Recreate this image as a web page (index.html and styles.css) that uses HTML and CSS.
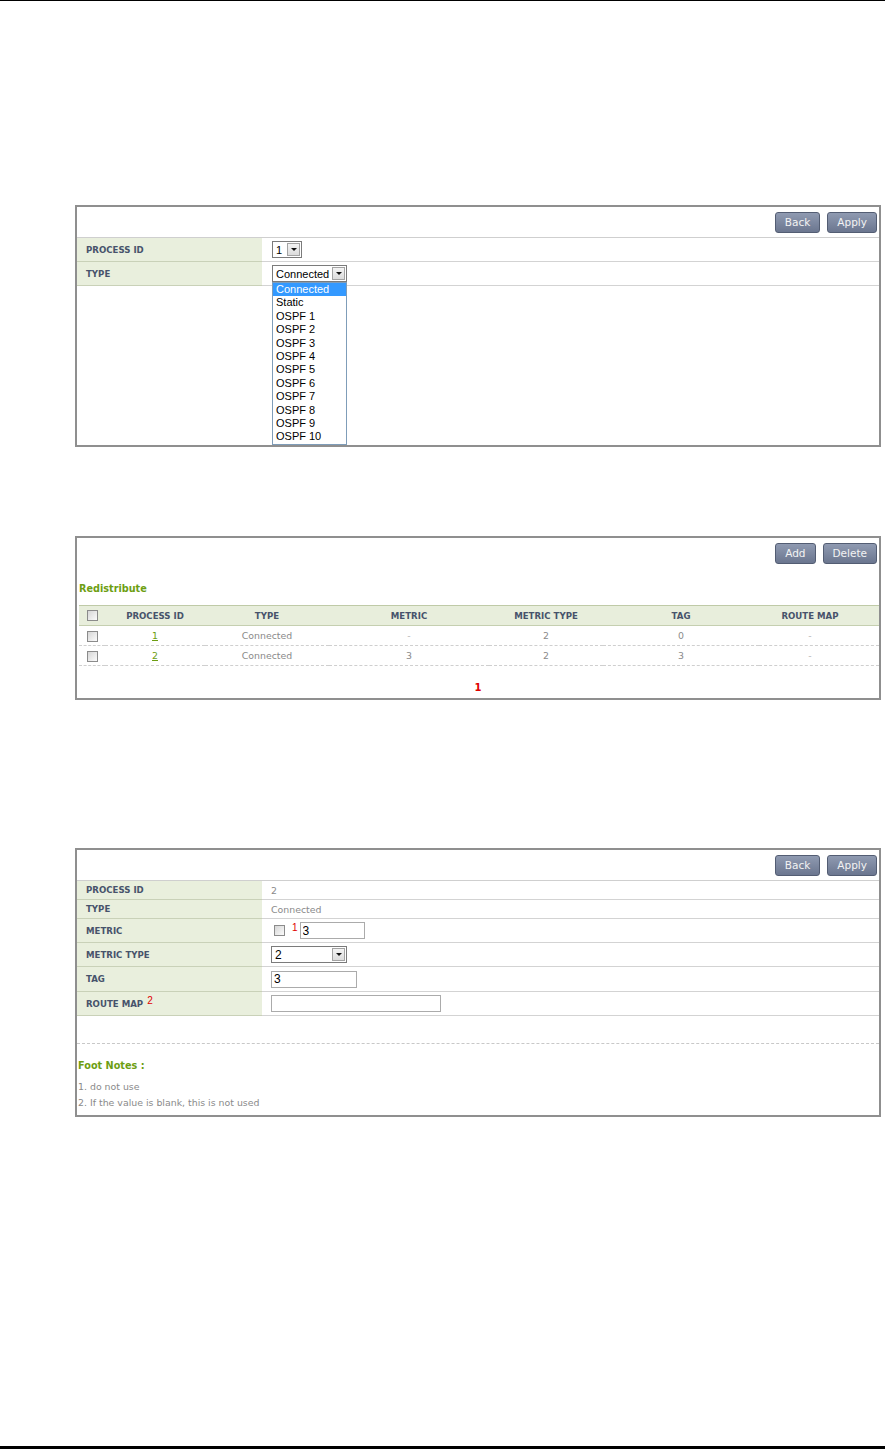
FILE: index.html
```html
<!DOCTYPE html>
<html lang="en">
  <head>
    <meta charset="UTF-8" />
    <meta name="viewport" content="width=device-width, initial-scale=1.0" />
    <title>Redistribute</title>
    <link rel="stylesheet" href="styles.css">
  </head>
  <body>
    <div class="page">
      <div class="rule-top"></div>
      <div class="content">

        <!-- add: type dropdown opened -->
        <div class="panel panel-type">
          <div class="toolbar lined">
            <button class="btn">Back</button>
            <button class="btn">Apply</button>
          </div>
          <div class="form-row">
            <div class="form-label">PROCESS ID</div>
            <div class="form-value">
              <div class="select select-id">
                <span class="select-text">1</span>
                <span class="select-arrow"></span>
              </div>
            </div>
          </div>
          <div class="form-row">
            <div class="form-label">TYPE</div>
            <div class="form-value">
              <div class="select-wrap">
                <div class="select select-type">
                  <span class="select-text">Connected</span>
                  <span class="select-arrow"></span>
                </div>
                <ul class="dropdown">
                  <li class="selected">Connected</li>
                  <li>Static</li>
                  <li>OSPF 1</li>
                  <li>OSPF 2</li>
                  <li>OSPF 3</li>
                  <li>OSPF 4</li>
                  <li>OSPF 5</li>
                  <li>OSPF 6</li>
                  <li>OSPF 7</li>
                  <li>OSPF 8</li>
                  <li>OSPF 9</li>
                  <li>OSPF 10</li>
                </ul>
              </div>
            </div>
          </div>
        </div>

        <!-- list -->
        <div class="panel panel-list">
          <div class="toolbar">
            <button class="btn">Add</button>
            <button class="btn">Delete</button>
          </div>
          <div class="section-title">Redistribute</div>
          <table class="grid">
            <colgroup>
              <col style="width: 26px">
              <col style="width: 100px">
              <col style="width: 124px">
              <col style="width: 160px">
              <col style="width: 114px">
              <col style="width: 156px">
              <col>
            </colgroup>
            <thead>
              <tr>
                <th><span class="checkbox"></span></th>
                <th>PROCESS ID</th>
                <th>TYPE</th>
                <th>METRIC</th>
                <th>METRIC TYPE</th>
                <th>TAG</th>
                <th class="last">ROUTE MAP</th>
              </tr>
            </thead>
            <tbody>
              <tr>
                <td><span class="checkbox"></span></td>
                <td><a class="link" href="#">1</a></td>
                <td>Connected</td>
                <td class="dim">-</td>
                <td>2</td>
                <td>0</td>
                <td class="last dim">-</td>
              </tr>
              <tr>
                <td><span class="checkbox"></span></td>
                <td><a class="link" href="#">2</a></td>
                <td>Connected</td>
                <td>3</td>
                <td>2</td>
                <td>3</td>
                <td class="last dim">-</td>
              </tr>
            </tbody>
          </table>
          <div class="pager">1</div>
        </div>

        <!-- edit -->
        <div class="panel panel-edit">
          <div class="toolbar lined">
            <button class="btn">Back</button>
            <button class="btn">Apply</button>
          </div>
          <div class="form-row short">
            <div class="form-label">PROCESS ID</div>
            <div class="form-value text">2</div>
          </div>
          <div class="form-row short">
            <div class="form-label">TYPE</div>
            <div class="form-value text">Connected</div>
          </div>
          <div class="form-row">
            <div class="form-label">METRIC</div>
            <div class="form-value">
              <span class="checkbox metric-check"></span>
              <span class="note-ref">1</span>
              <input class="input input-metric" type="text" value="3">
            </div>
          </div>
          <div class="form-row">
            <div class="form-label">METRIC TYPE</div>
            <div class="form-value">
              <div class="select select-mtype">
                <span class="select-text">2</span>
                <span class="select-arrow"></span>
              </div>
            </div>
          </div>
          <div class="form-row tall">
            <div class="form-label">TAG</div>
            <div class="form-value">
              <input class="input input-tag" type="text" value="3">
            </div>
          </div>
          <div class="form-row">
            <div class="form-label">ROUTE MAP <span class="note-ref">2</span></div>
            <div class="form-value">
              <input class="input input-map" type="text" value="">
            </div>
          </div>
          <div class="footnotes">
            <div class="section-title foot-title">Foot Notes :</div>
            <div class="foot-line">1. do not use</div>
            <div class="foot-line">2. If the value is blank, this is not used</div>
          </div>
        </div>

      </div>
      <div class="rule-bottom"></div>
    </div>
  </body>
</html>
```

FILE: styles.css
```css
* {
  box-sizing: border-box;
}
body {
  margin: 0;
  background: #fff;
  font-family: "DejaVu Sans", Verdana, sans-serif;
  color: #8a8a8a;
}
.page {
  min-height: 1449px;
  display: flex;
  flex-direction: column;
}
.rule-top {
  height: 1px;
  background: #000;
}
.rule-bottom {
  height: 3px;
  margin-top: auto;
  background: #000;
}
.content {
  padding: 0 4px 0 75px;
}
.panel {
  border: 2px solid #8f8f8f;
  background: #fff;
}
.panel-type {
  margin-top: 204px;
  height: 242px;
}
.panel-list {
  margin-top: 89px;
  height: 164px;
}
.panel-edit {
  margin-top: 148px;
  height: 269px;
}
.toolbar {
  height: 30px;
  display: flex;
  justify-content: flex-end;
  align-items: center;
  gap: 7px;
  padding-right: 2px;
}
.toolbar.lined {
  height: 31px;
  border-bottom: 1px solid #cfcfcf;
}
.btn {
  height: 21px;
  padding: 0 9px;
  border: 1px solid #535d73;
  border-radius: 3px;
  background: linear-gradient(#8f9ab1, #6b768f);
  color: #f3f3f3;
  font-family: "DejaVu Sans", Verdana, sans-serif;
  font-size: 10.5px;
  cursor: pointer;
}

/* form rows */
.form-row {
  display: grid;
  grid-template-columns: 185px 1fr;
  height: 24px;
}
.form-row.short {
  height: 19px;
}
.form-row.tall {
  height: 25px;
}
.form-label {
  display: flex;
  align-items: center;
  padding-left: 9px;
  background: #e9efdd;
  border-bottom: 1px solid #c9d1b8;
  color: #47536b;
  font-size: 8.6px;
  font-weight: bold;
}
.form-value {
  display: flex;
  align-items: center;
  padding-left: 9px;
  border-bottom: 1px solid #d3d3d3;
}
.form-value.text {
  font-size: 9.4px;
}

/* fake selects */
.select {
  display: flex;
  align-items: center;
  height: 17px;
  padding-left: 3px;
  border: 1px solid #7b7b7b;
  background: #fff;
  color: #000;
  font-family: "Liberation Sans", Arial, sans-serif;
  font-size: 11px;
}
.select-text {
  flex: 1;
}
.select-arrow {
  width: 13px;
  height: 13px;
  margin-right: 1px;
  display: flex;
  align-items: center;
  justify-content: center;
  border: 1px solid #a3a3a3;
  background: linear-gradient(#f4f4f4, #dcdcdc);
}
.select-arrow::after {
  content: "";
  border-left: 3px solid transparent;
  border-right: 3px solid transparent;
  border-top: 3px solid #111;
}
.select-id {
  width: 30px;
  margin-left: 1px;
}
.select-type {
  width: 75px;
}
.select-mtype {
  width: 76px;
  font-size: 12px;
}
.select-wrap {
  position: relative;
  margin-left: 1px;
}
.dropdown {
  position: absolute;
  top: 100%;
  left: 0;
  width: 75px;
  margin: 0;
  padding: 0;
  list-style: none;
  border: 1px solid #7f9db9;
  background: #fff;
  color: #000;
  font-family: "Liberation Sans", Arial, sans-serif;
  font-size: 11px;
  z-index: 2;
}
.dropdown li {
  height: 13.4px;
  line-height: 13.4px;
  padding-left: 3px;
}
.dropdown li.selected {
  background: #3399ff;
  color: #fff;
}

/* inputs */
.checkbox {
  display: inline-block;
  width: 11px;
  height: 11px;
  border: 1px solid #8b8b8b;
  background: linear-gradient(135deg, #d6d6d6, #fbfbfb);
  vertical-align: middle;
}
.metric-check {
  margin-left: 3px;
}
.note-ref {
  color: #e00000;
  font-family: "Liberation Sans", Arial, sans-serif;
  font-size: 10px;
  font-weight: normal;
  margin-bottom: 6px;
  margin-left: 7px;
  margin-right: 2px;
}
.form-label .note-ref {
  margin: 0 0 6px 4px;
}
.input {
  height: 17px;
  padding: 0 2px;
  border: 1px solid #ababab;
  color: #000;
  font-family: "Liberation Sans", Arial, sans-serif;
  font-size: 12px;
}
.input-metric {
  width: 65px;
}
.input-tag {
  width: 86px;
}
.input-map {
  width: 170px;
}

/* list */
.section-title {
  padding: 14px 0 9px 2px;
  line-height: 14px;
  color: #6d9e12;
  font-size: 9.7px;
  font-weight: bold;
}
.grid {
  width: calc(100% - 2px);
  margin-left: 2px;
  border-collapse: collapse;
  table-layout: fixed;
}
.grid th {
  height: 20px;
  padding: 0;
  background: #e8eedc;
  border-top: 1px solid #bfcaa7;
  border-bottom: 1px solid #c5cfb0;
  color: #47536b;
  font-size: 8.6px;
  font-weight: bold;
  text-align: center;
}
.grid td {
  height: 20px;
  padding: 0;
  border-bottom: 1px dashed #cfcfcf;
  font-size: 9.4px;
  text-align: center;
}
.grid .last {
  padding-right: 18px;
}
.grid .dim {
  color: #b5b5b5;
}
.link {
  color: #6d9e12;
}
.pager {
  padding-top: 16px;
  line-height: 12px;
  text-align: center;
  color: #e00000;
  font-size: 10px;
  font-weight: bold;
}

/* foot notes */
.footnotes {
  margin-top: 27px;
  border-top: 1px dashed #c8c8c8;
  padding-left: 1px;
}
.foot-title {
  padding: 15px 0 6px 0;
}
.foot-line {
  line-height: 16px;
  font-size: 9.4px;
}
```
